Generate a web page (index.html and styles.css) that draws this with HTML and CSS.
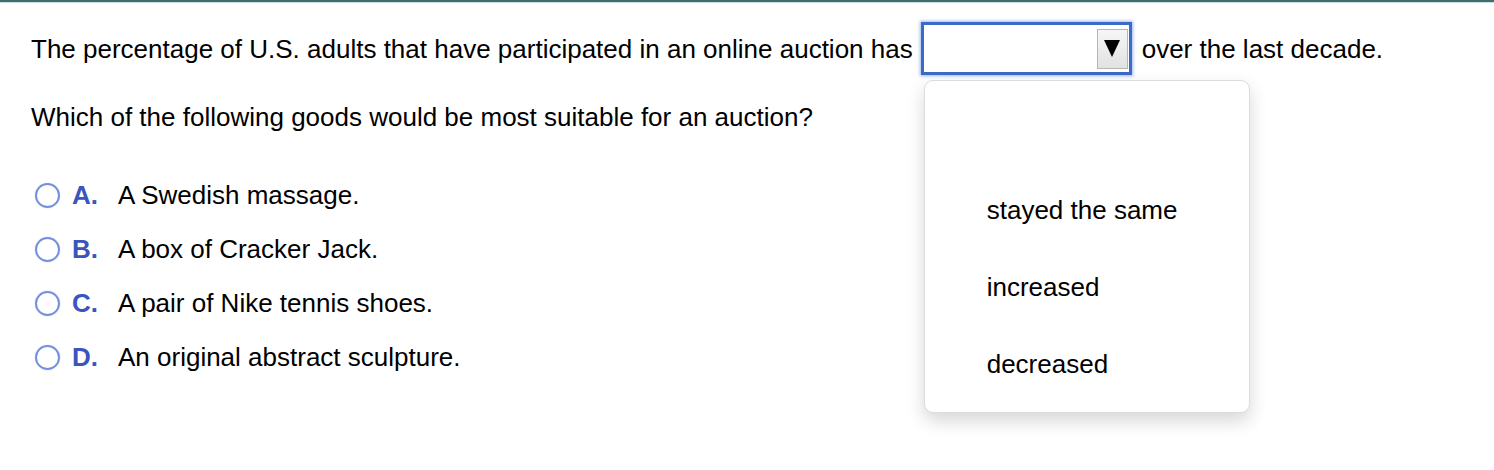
FILE: index.html
```html
<!DOCTYPE html>
<html>
<head>
<meta charset="utf-8">
<link rel="stylesheet" href="styles.css">
</head>
<body>
<div class="topbar"></div>
<div class="page">
  <div class="stmt">
    <span>The percentage of U.S. adults that have participated in an online auction has</span>
    <div class="select">
      <div class="arrow"><span class="tri"></span></div>
      <div class="popup">
        <div class="opt"></div>
        <div class="opt">stayed the same</div>
        <div class="opt">increased</div>
        <div class="opt">decreased</div>
      </div>
    </div>
    <span>over the last decade.</span>
  </div>
  <div class="question">Which of the following goods would be most suitable for an auction?</div>
  <div class="choices">
    <div class="choice"><span class="radio"></span><span class="letter">A.</span><span class="txt">A Swedish massage.</span></div>
    <div class="choice"><span class="radio"></span><span class="letter">B.</span><span class="txt">A box of Cracker Jack.</span></div>
    <div class="choice"><span class="radio"></span><span class="letter">C.</span><span class="txt">A pair of Nike tennis shoes.</span></div>
    <div class="choice"><span class="radio"></span><span class="letter">D.</span><span class="txt">An original abstract sculpture.</span></div>
  </div>
</div>
</body>
</html>
```
FILE: styles.css
```css
html, body {
  margin: 0;
  padding: 0;
  background: #fff;
}
body {
  font-family: "Liberation Sans", Arial, sans-serif;
  font-size: 26px;
  line-height: 30px;
  color: #000;
  width: 1494px;
  height: 470px;
  overflow: hidden;
}
.topbar {
  height: 2px;
  background: #3e6f6e;
  border-bottom: 1px solid #cfdcdc;
}
.page {
  padding-left: 31px;
}
.stmt {
  display: flex;
  align-items: center;
  margin-top: 19px;
  height: 53px;
}
.select {
  position: relative;
  box-sizing: border-box;
  width: 211px;
  height: 53px;
  margin-left: 8px;
  margin-right: 10px;
  border: 3px solid #3b6ac8;
  box-shadow: 0 0 3px 1px rgba(80, 120, 220, 0.55);
  background: #fff;
  display: flex;
  justify-content: flex-end;
  align-items: center;
  padding-right: 1px;
}
.arrow {
  box-sizing: border-box;
  width: 31px;
  height: 40px;
  border: 1px solid #b5b5b5;
  background: linear-gradient(#f6f6f6, #e2e2e2);
  display: flex;
  align-items: center;
  justify-content: center;
}
.tri {
  width: 0;
  height: 0;
  border-left: 8px solid transparent;
  border-right: 8px solid transparent;
  border-top: 17px solid #000;
}
.popup {
  position: absolute;
  left: 0px;
  top: 55px;
  width: 326px;
  height: 333px;
  box-sizing: border-box;
  background: #fff;
  border: 1px solid #dcdcdc;
  border-radius: 9px;
  box-shadow: 0 8px 18px rgba(0, 0, 0, 0.16);
  padding-top: 14px;
  z-index: 5;
}
.opt {
  height: 77px;
  line-height: 77px;
  padding-left: 62px;
}
.question {
  margin-top: 27px;
}
.choices {
  margin-top: 50px;
  display: flex;
  flex-direction: column;
  gap: 28px;
}
.choice {
  display: flex;
  align-items: center;
  height: 26px;
}
.radio {
  box-sizing: border-box;
  width: 25px;
  height: 25px;
  border: 2.5px solid #7290e0;
  border-radius: 50%;
  margin-left: 4px;
  box-shadow: 0 0 1px rgba(90, 120, 220, 0.5);
}
.letter {
  color: #3a55bd;
  font-weight: bold;
  margin-left: 12px;
  width: 46px;
}
```
